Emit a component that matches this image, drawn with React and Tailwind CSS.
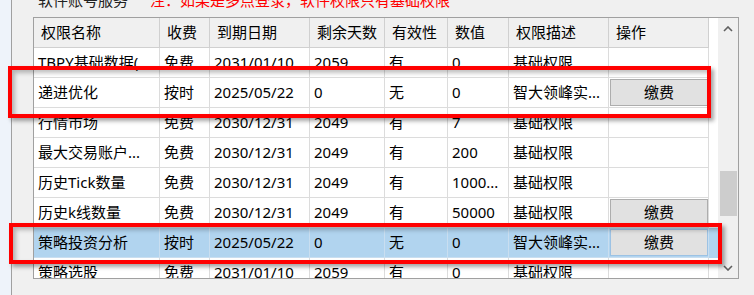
const COLS = [
  "w-[126px]",
  "w-[50px]",
  "w-[100px]",
  "w-[75px]",
  "w-[63px]",
  "w-[61px]",
  "w-[100px]",
  "w-[100px]",
];

const HEADERS = ["权限名称", "收费", "到期日期", "剩余天数", "有效性", "数值", "权限描述", "操作"];

const ROWS = [
  ["TBPY基础数据(", "免费", "2031/01/10", "2059", "有", "0", "基础权限", false],
  ["递进优化", "按时", "2025/05/22", "0", "无", "0", "智大领峰实...", true],
  ["行情市场", "免费", "2030/12/31", "2049", "有", "7", "基础权限", false],
  ["最大交易账户...", "免费", "2030/12/31", "2049", "有", "200", "基础权限", false],
  ["历史Tick数量", "免费", "2030/12/31", "2049", "有", "1000...", "基础权限", false],
  ["历史k线数量", "免费", "2030/12/31", "2049", "有", "50000", "基础权限", true],
  ["策略投资分析", "按时", "2025/05/22", "0", "无", "0", "智大领峰实...", true, true],
  ["策略选股", "免费", "2031/01/10", "2059", "有", "0", "基础权限", false],
];

function Chevron({ up }) {
  return (
    <svg width="10" height="6" viewBox="0 0 10 6">
      <polyline
        points={up ? "1,5 5,1 9,5" : "1,1 5,5 9,1"}
        fill="none"
        stroke="#606060"
        strokeWidth="1.6"
      />
    </svg>
  );
}

function Row({ row }) {
  const selected = row[8];
  return (
    <div
      className={`flex h-[30px] shrink-0 ${selected ? "bg-[#b1d4ef]" : ""}`}
    >
      {row.slice(0, 7).map((text, i) => (
        <div
          key={i}
          className={`${COLS[i]} flex shrink-0 items-center overflow-hidden whitespace-nowrap border-b border-r ${selected ? "border-[#c9def0]" : "border-[#dcdcdc]"} pl-[4px]`}
        >
          {text}
        </div>
      ))}
      <div
        className={`${COLS[7]} flex shrink-0 items-center border-b border-r ${selected ? "border-[#c9def0]" : "border-[#dcdcdc]"} pl-[1px]`}
      >
        {row[7] && (
          <div
            className={`flex h-[27px] w-[98px] items-center justify-center border bg-[#e1e1e1] ${selected ? "border-[#9cc2e4]" : "border-[#adadad]"}`}
          >
            缴费
          </div>
        )}
      </div>
    </div>
  );
}

export default function App() {
  return (
    <div
      className="relative flex h-[295px] w-[754px] overflow-hidden bg-[#f0f0f0] text-[15px] text-black"
      style={{ fontFamily: '"Noto Sans", "Noto Sans CJK SC", sans-serif' }}
    >
      <div className="w-[12px] shrink-0 border-r border-[#a0a0a0] bg-[#eef3fa]" />

      <div className="flex flex-1 flex-col pl-[21px]">
        <div className="flex h-[17px] shrink-0 overflow-hidden pl-[5px]">
          <div className="-mt-[7px] flex leading-[15px]">
            <span className="w-[112px] text-[#222]">软件账号服务</span>
            <span className="text-[#ff0000]">注：如果是多点登录，软件权限只有基础权限</span>
          </div>
        </div>

        <div className="flex h-[262px] w-[706px] border border-[#a0a0a0] bg-white">
          <div className="flex flex-1 flex-col overflow-hidden">
            <div className="flex h-[30px] shrink-0">
              {HEADERS.map((h, i) => (
                <div
                  key={h}
                  className={`${COLS[i]} flex shrink-0 items-center border-b border-r border-[#d0d0d0] bg-[#f0f0f0] pl-[7px]`}
                >
                  {h}
                </div>
              ))}
            </div>
            {ROWS.map((row) => (
              <Row key={row[0]} row={row} />
            ))}
          </div>

          <div className="flex w-[20px] shrink-0 flex-col bg-[#f0f0f0]">
            <div className="flex h-[21px] items-center justify-center">
              <Chevron up />
            </div>
            <div className="flex-1">
              <div className="mx-auto mt-[132px] h-[45px] w-[17px] bg-[#cdcdcd]" />
            </div>
            <div className="flex h-[20px] items-center justify-center">
              <Chevron />
            </div>
          </div>
        </div>
      </div>

      <div className="pointer-events-none absolute left-[8px] top-[66px] h-[52px] w-[703px] border-[4px] border-[#ff0000] shadow-[3px_3px_4px_rgba(0,0,0,0.35),inset_3px_3px_4px_rgba(0,0,0,0.25)]" />
      <div className="pointer-events-none absolute left-[9px] top-[223px] h-[41px] w-[713px] border-[4px] border-[#ff0000] shadow-[3px_3px_4px_rgba(0,0,0,0.35),inset_3px_3px_4px_rgba(0,0,0,0.25)]" />
    </div>
  );
}
